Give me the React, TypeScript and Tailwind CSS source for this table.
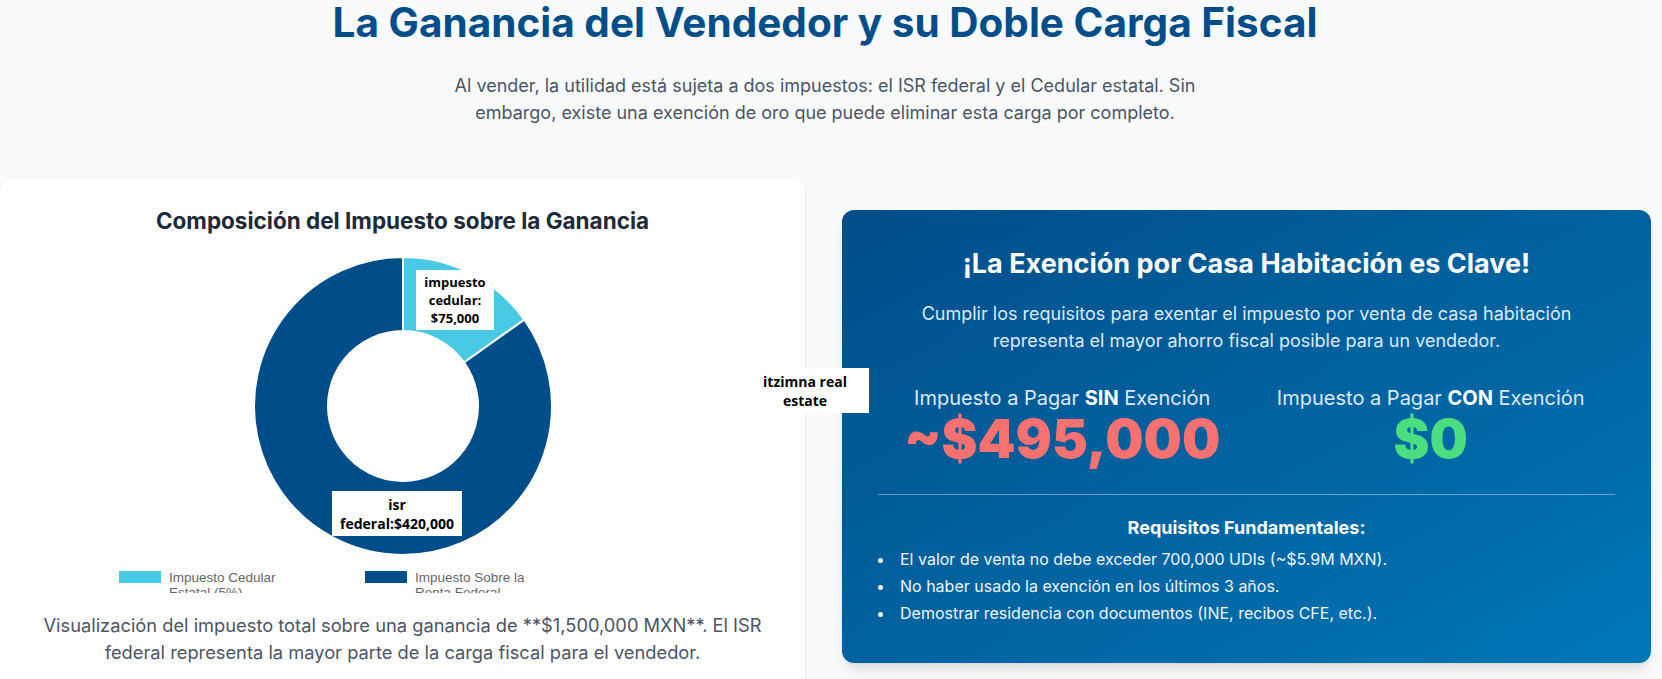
import type { ReactNode } from "react";

// Datos del gráfico de dona
const SLICES = [
  { label: "Impuesto Cedular Estatal (5%)", value: 75000, color: "#48cae4" },
  { label: "Impuesto Sobre la Renta Federal", value: 420000, color: "#004e89" },
];

const REQUISITOS = [
  "El valor de venta no debe exceder 700,000 UDIs (~$5.9M MXN).",
  "No haber usado la exención en los últimos 3 años.",
  "Demostrar residencia con documentos (INE, recibos CFE, etc.).",
];

// Arco de dona entre dos ángulos (grados, 0 = arriba, sentido horario)
const arcPath = (cx: number, cy: number, r: number, r0: number, a0: number, a1: number) => {
  const p = (rad: number, a: number) => {
    const t = ((a - 90) * Math.PI) / 180;
    return `${cx + rad * Math.cos(t)} ${cy + rad * Math.sin(t)}`;
  };
  const large = a1 - a0 > 180 ? 1 : 0;
  return `M ${p(r, a0)} A ${r} ${r} 0 ${large} 1 ${p(r, a1)} L ${p(r0, a1)} A ${r0} ${r0} 0 ${large} 0 ${p(r0, a0)} Z`;
};

const Donut = () => {
  const total = SLICES.reduce((s, x) => s + x.value, 0);
  let start = 0;
  return (
    <svg width="300" height="300" viewBox="0 0 300 300">
      {SLICES.map((s) => {
        const end = start + (s.value / total) * 360;
        const d = arcPath(150, 150, 149, 75, start, end);
        start = end;
        return <path key={s.label} d={d} fill={s.color} stroke="#ffffff" strokeWidth="2" />;
      })}
    </svg>
  );
};

// Etiquetas blancas sobrepuestas
const Tag = ({ className, children }: { className: string; children: ReactNode }) => (
  <div
    className={`absolute bg-white flex flex-col items-center justify-center text-center font-bold text-black font-['Open_Sans',sans-serif] ${className}`}
  >
    {children}
  </div>
);

export default function App() {
  return (
    <div className="relative min-h-screen overflow-hidden bg-slate-50 font-['Inter',sans-serif]">
      {/* Encabezado */}
      <header className="text-center pr-[12px]">
        <h1 className="text-[40.5px] leading-[46px] font-bold text-[#004e89]">
          La Ganancia del Vendedor y su Doble Carga Fiscal
        </h1>
        <p className="mt-[26px] mx-auto max-w-[760px] text-lg leading-[27px] text-gray-600">
          Al vender, la utilidad está sujeta a dos impuestos: el ISR federal y el Cedular estatal. Sin
          embargo, existe una exención de oro que puede eliminar esta carga por completo.
        </p>
      </header>

      <div className="mt-[53px] grid grid-cols-[805px_809px] gap-[37px] items-center">
        {/* Tarjeta del gráfico */}
        <div className="bg-white rounded-xl shadow-sm px-6 pt-[28px] pb-[27px] flex flex-col items-center">
          <h2 className="text-[22.5px] leading-7 font-bold text-gray-800">
            Composición del Impuesto sobre la Ganancia
          </h2>
          <div className="mt-[21px]">
            <Donut />
          </div>
          <div className="mt-[14px] h-[23px] overflow-hidden self-start pl-[95px] flex font-['Liberation_Sans',Arial,sans-serif] text-[13.5px] leading-[15px] text-[#666666]">
            {SLICES.map((s) => (
              <div key={s.label} className="w-[246px] flex items-start gap-2">
                <span className="mt-[1px] w-[42px] h-[12px] shrink-0" style={{ backgroundColor: s.color }} />
                <span className="w-[125px]">{s.label}</span>
              </div>
            ))}
          </div>
          <p className="mt-[19px] text-[18.3px] leading-[27px] text-gray-600 text-center max-w-[740px]">
            Visualización del impuesto total sobre una ganancia de **$1,500,000 MXN**. El ISR
            federal representa la mayor parte de la carga fiscal para el vendedor.
          </p>
        </div>

        {/* Tarjeta de exención */}
        <div className="rounded-xl shadow-lg bg-gradient-to-br from-[#004e89] to-[#0077b6] px-9 pt-[36px] pb-9 text-white">
          <h2 className="text-[27px] leading-9 font-bold text-center">
            ¡La Exención por Casa Habitación es Clave!
          </h2>
          <p className="mt-[18px] mx-auto max-w-[660px] text-lg leading-[27px] text-blue-100 text-center">
            Cumplir los requisitos para exentar el impuesto por venta de casa habitación representa
            el mayor ahorro fiscal posible para un vendedor.
          </p>
          <div className="mt-[30px] grid grid-cols-2 text-center">
            <div>
              <p className="text-xl leading-7 text-blue-100">
                Impuesto a Pagar <span className="font-bold text-white">SIN</span> Exención
              </p>
              <p className="text-[54px] leading-none font-black text-[#f87171]">~$495,000</p>
            </div>
            <div>
              <p className="text-xl leading-7 text-blue-100">
                Impuesto a Pagar <span className="font-bold text-white">CON</span> Exención
              </p>
              <p className="text-[54px] leading-none font-black text-[#4ade80]">$0</p>
            </div>
          </div>
          <div className="mt-[28px] pt-[19px] border-t border-white/40">
            <h3 className="text-lg leading-7 font-bold text-center">Requisitos Fundamentales:</h3>
            <ul className="mt-1 list-disc list-inside text-base leading-[27px] text-blue-50">
              {REQUISITOS.map((r) => (
                <li key={r}>{r}</li>
              ))}
            </ul>
          </div>
        </div>
      </div>

      {/* Etiquetas sobrepuestas */}
      <Tag className="left-[416px] top-[270px] w-[78px] h-[60px] text-[13px] leading-[18px]">
        <span>impuesto</span>
        <span>cedular:</span>
        <span>$75,000</span>
      </Tag>
      <Tag className="left-[332px] top-[491px] w-[130px] h-[45px] text-[14px] leading-[19px]">
        <span>isr</span>
        <span>federal:$420,000</span>
      </Tag>
      <Tag className="left-[741px] top-[368px] w-[128px] h-[45px] text-[14px] leading-[19px]">
        <span>itzimna real</span>
        <span>estate</span>
      </Tag>
    </div>
  );
}
